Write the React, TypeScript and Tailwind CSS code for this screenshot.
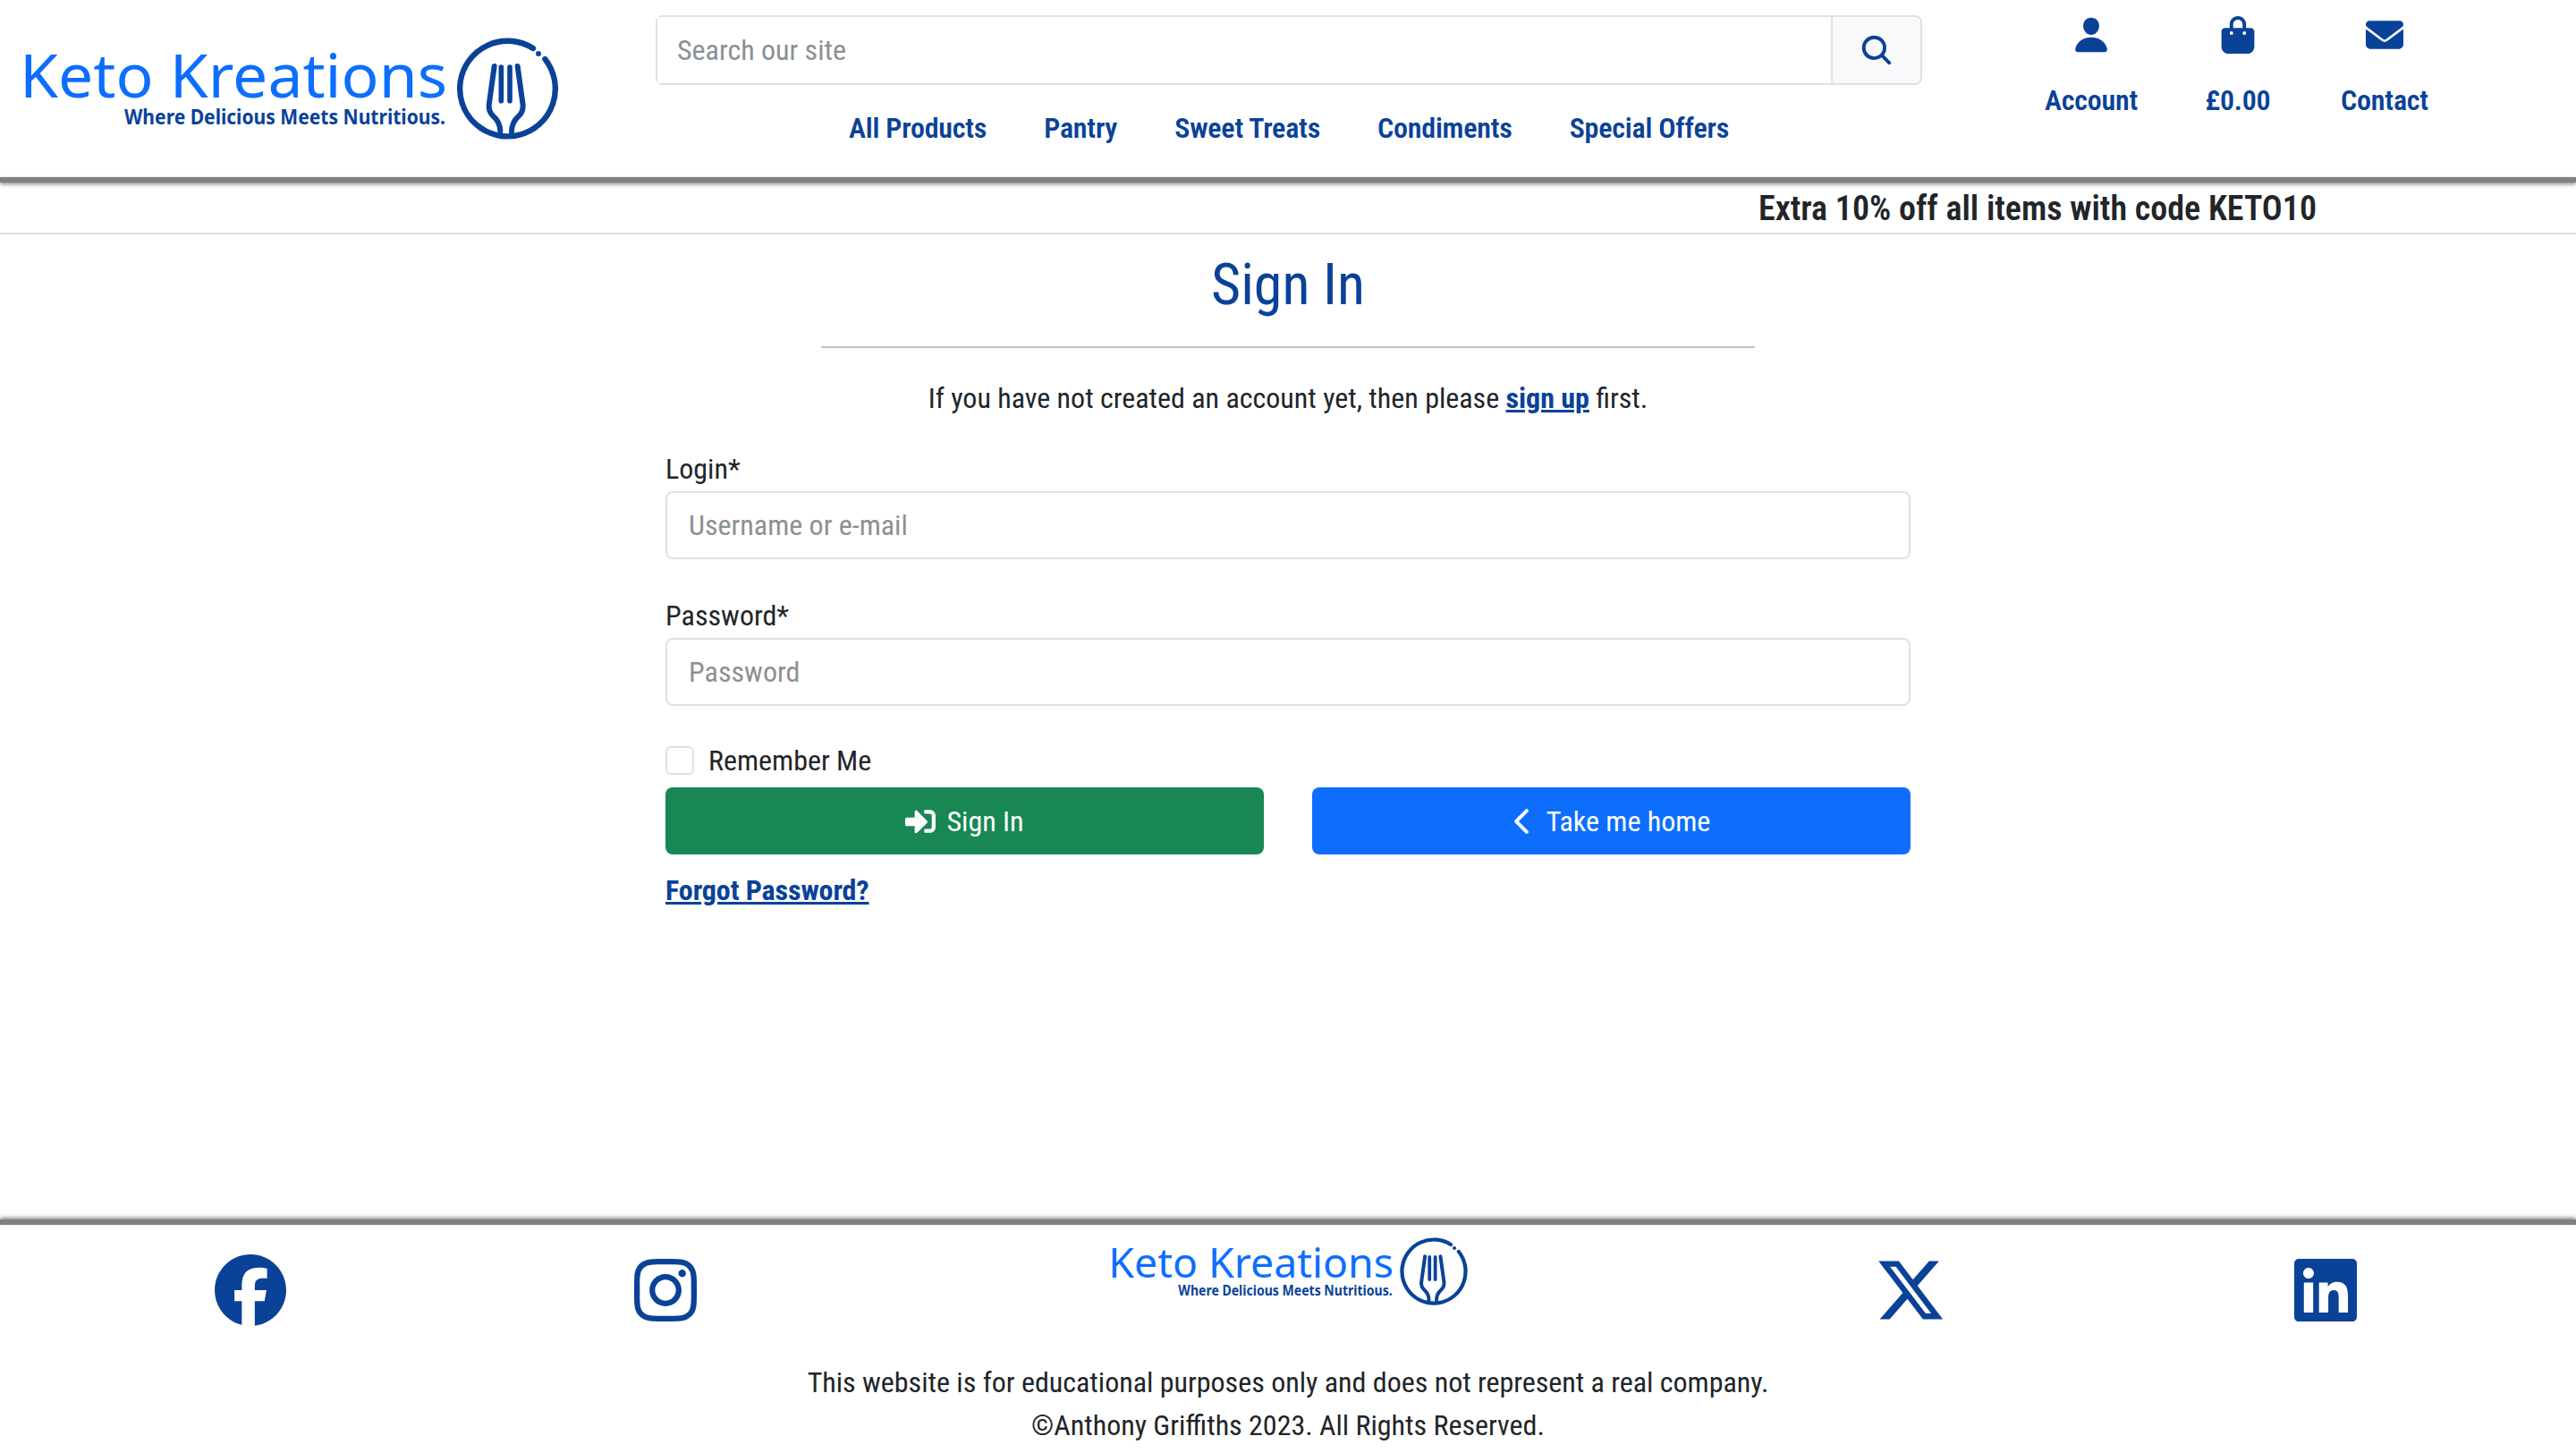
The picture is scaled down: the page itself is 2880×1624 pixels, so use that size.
import React from "react";
import { FaBagShopping, FaEnvelope, FaFacebook, FaInstagram, FaLinkedin, FaXTwitter } from "react-icons/fa6";
import { FaSignInAlt } from "react-icons/fa";
import { IoChevronBack, IoPerson, IoSearch } from "react-icons/io5";

function Logo({ className }: { className: string }) {
  return (
    <svg viewBox="0 -20 602 132" className={className}>
      <text x="0" y="65" textLength="478" lengthAdjust="spacingAndGlyphs" fontFamily="'Noto Sans', sans-serif" fontSize="68" fill="#0d6efd">Keto Kreations</text>
      <text x="117" y="95" textLength="359" lengthAdjust="spacingAndGlyphs" fontFamily="'Noto Sans', sans-serif" fontWeight="700" fontSize="23" fill="#0a4298">Where Delicious Meets Nutritious.</text>
      <g transform="translate(458,-14) scale(0.3333)" fill="none" stroke="#0a4298" strokeLinecap="round" strokeLinejoin="round">
        <path d="M348 72 A160 160 0 1 0 388 108" strokeWidth="19" />
        <circle cx="366" cy="90" r="9" fill="#0a4298" stroke="none" />
        <path d="M218 132 L200 262 Q198 285 215 300 Q238 320 238 352" strokeWidth="18" />
        <path d="M296 132 L314 262 Q316 285 299 300 Q276 320 276 352" strokeWidth="18" />
        <path d="M241 135 L241 248 M270 135 L270 248" strokeWidth="17" />
      </g>
    </svg>
  );
}

function TopLink({ icon, label }: { icon: React.ReactNode; label: string }) {
  return (
    <a className="flex w-[164px] flex-col items-center font-semibold tracking-[-0.2px] text-[#0a4298]">
      <span className="flex h-[42px] items-center justify-center">{icon}</span>
      <span className="mt-[32px] leading-[40px]">{label}</span>
    </a>
  );
}

function Field({ label, placeholder, type }: { label: string; placeholder: string; type: string }) {
  return (
    <div className="mb-[39px]">
      <label className="block h-[49px] leading-[48px]">{label}</label>
      <input
        type={type}
        placeholder={placeholder}
        className="block h-[76px] w-full rounded-[8px] border-2 border-[#dee2e6] bg-white px-[24px] outline-none placeholder:text-[#8a9095]"
      />
    </div>
  );
}

export default function App() {
  return (
    <div className="flex h-[1624px] flex-col overflow-hidden bg-white text-[32px] leading-[48px] text-[#212529] [font-family:Roboto,sans-serif] [font-stretch:75%]">
      <header className="flex h-[198px] items-start">
        <div className="w-[733px] pl-[22px] pt-[24px]">
          <Logo className="h-[132px] w-[602px]" />
        </div>
        <div className="w-[1416px] pt-[17px]">
          <div className="flex h-[78px] rounded-[8px] border-2 border-[#dee2e6]">
            <input placeholder="Search our site" className="min-w-0 flex-1 bg-white px-[22px] outline-none placeholder:text-[#8a9095]" />
            <div className="flex w-[100px] items-center justify-center rounded-r-[6px] border-l-2 border-[#dee2e6] bg-[#f8f9fa] text-[#0a4298]">
              <IoSearch className="h-[40px] w-[40px]" />
            </div>
          </div>
          <nav className="mt-[24px] flex justify-center gap-[64px] font-semibold tracking-[-0.2px] text-[#0a4298]">
            <a>All Products</a>
            <a>Pantry</a>
            <a>Sweet Treats</a>
            <a>Condiments</a>
            <a>Special Offers</a>
          </nav>
        </div>
        <div className="ml-[107px] flex pt-[18px]">
          <TopLink icon={<IoPerson className="h-[44px] w-[44px]" />} label="Account" />
          <TopLink icon={<FaBagShopping className="h-[42px] w-[42px]" />} label="£0.00" />
          <TopLink icon={<FaEnvelope className="h-[42px] w-[42px]" />} label="Contact" />
        </div>
      </header>
      <div className="h-[6px] bg-[#808080] shadow-[0_2px_4px_#888]" />
      <div className="flex h-[58px] items-center justify-end border-b-2 border-[#dcdcdc] pr-[290px] pt-[2px] text-[38px] font-semibold">
        Extra 10% off all items with code KETO10
      </div>
      <main className="flex-1">
        <h1 className="mt-[21px] text-center text-[64px] leading-[72px] text-[#0a4298]">Sign In</h1>
        <hr className="mx-auto mt-[32px] w-[1044px] border-t-2 border-[#c4c4c4]" />
        <p className="mt-[32px] text-center">
          If you have not created an account yet, then please{" "}
          <a className="font-bold text-[#0a4298] underline">sign up</a> first.
        </p>
        <div className="mx-auto mt-[31px] w-[1392px]">
          <Field label="Login*" placeholder="Username or e-mail" type="text" />
          <Field label="Password*" placeholder="Password" type="password" />
          <label className="mt-[4px] flex h-[44px] items-center gap-[16px]">
            <span className="h-[32px] w-[32px] rounded-[6px] border-2 border-[#dee2e6] bg-white" />
            Remember Me
          </label>
          <div className="mt-[8px] flex justify-between">
            <button className="flex h-[75px] w-[669px] items-center justify-center gap-[12px] rounded-[8px] bg-[#198754] text-white">
              <FaSignInAlt className="h-[34px] w-[34px]" /> Sign In
            </button>
            <button className="flex h-[75px] w-[669px] items-center justify-center gap-[7px] rounded-[8px] bg-[#0d6efd] pr-[11px] text-white">
              <IoChevronBack className="h-[42px] w-[42px]" /> Take me home
            </button>
          </div>
          <a className="mt-[16px] inline-block font-bold tracking-[-0.1px] text-[#0a4298] underline">Forgot Password?</a>
        </div>
      </main>
      <div className="h-[6px] bg-[#808080] shadow-[0_-2px_4px_#888]" />
      <footer className="h-[255px] px-[48px]">
        <div className="grid h-[152px] grid-cols-6 items-start text-[#0a4298]">
          <div className="flex justify-center pt-[33px]"><FaFacebook className="h-[80px] w-[80px]" /></div>
          <div className="flex justify-center pt-[33px]"><FaInstagram className="h-[80px] w-[80px]" /></div>
          <div className="col-span-2 flex justify-center pt-[2px]"><Logo className="h-[88px] w-[402px]" /></div>
          <div className="flex justify-center pt-[33px]"><FaXTwitter className="h-[80px] w-[80px]" /></div>
          <div className="flex justify-center pt-[33px]"><FaLinkedin className="h-[80px] w-[80px]" /></div>
        </div>
        <p className="text-center">This website is for educational purposes only and does not represent a real company.</p>
        <p className="text-center">©Anthony Griffiths 2023. All Rights Reserved.</p>
      </footer>
    </div>
  );
}
